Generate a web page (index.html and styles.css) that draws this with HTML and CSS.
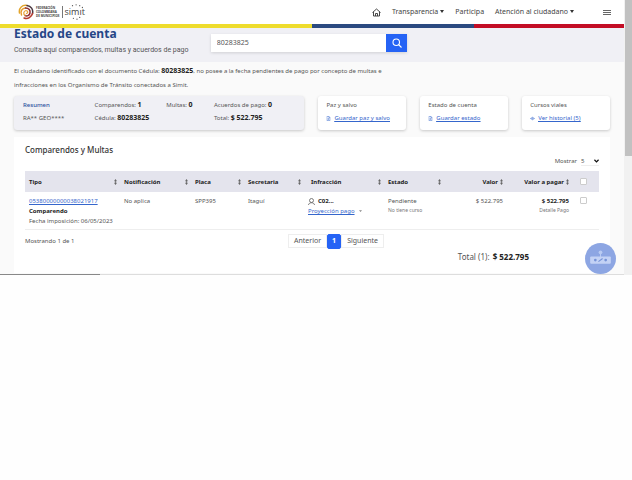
FILE: index.html
```html
<!DOCTYPE html>
<html lang="es">
<head>
<meta charset="utf-8">
<title>Estado de cuenta</title>
<link rel="stylesheet" href="styles.css">
</head>
<body>
<svg class="defs" aria-hidden="true">
  <symbol id="sort" viewBox="0 0 4 8"><path d="M2 0l2 3H2.500v2H4L2 8 0 5h1.500V3H0z"/></symbol>
  <symbol id="doc" viewBox="0 0 10 12"><path d="M1 1h5l3 3v7H1zM6 1v3h3M3 6h4M3 8.500h4" fill="none" stroke="currentColor" stroke-width="1.200"/></symbol>
</svg>
<div class="browser">
  <div class="page">
    <header class="top">
      <a class="brand" href="#">
        <svg class="emblem" viewBox="0 0 32 32" fill="none" stroke-linecap="round" aria-hidden="true">
          <path d="M3 18C1 8 9 1 18 3" stroke="#e3a52c" stroke-width="3"/>
          <path d="M18 3c8 1 13 8 11 16" stroke="#4a3840" stroke-width="3"/>
          <path d="M29 19c-2 7-9 12-17 9" stroke="#b73a2e" stroke-width="3"/>
          <path d="M7 22C4 15 8 8 15 8" stroke="#e59a2e" stroke-width="3"/>
          <path d="M15 8c7 0 10 5 9 10-1 5-6 7-10 5" stroke="#8c2b34" stroke-width="3"/>
          <path d="M14 23c-4-3-3-9 2-10 4 0 5 5 1 6" stroke="#e8a13a" stroke-width="2.500"/>
        </svg>
        <span class="fcm">FEDERACIÓN<br>COLOMBIANA<br>DE MUNICIPIOS</span>
        <span class="simit">simıt
          <svg viewBox="0 0 24 20" aria-hidden="true"><g fill="#555"><circle cx="7" cy="3" r=".7"/><circle cx="11" cy="2" r=".7"/><circle cx="15" cy="3" r=".7"/><circle cx="18" cy="5" r=".7"/><circle cx="8" cy="17" r=".7"/><circle cx="12" cy="18" r=".7"/><circle cx="15" cy="16" r=".7"/></g></svg>
        </span>
      </a>
      <nav class="nav">
        <a href="#" aria-label="Inicio"><svg class="home" viewBox="0 0 18 18" fill="none" stroke="#333" stroke-width="1.800"><path d="M1 9l8-7 8 7M3 8v8h12V8M7 16v-5h4v5"/></svg></a>
        <a class="drop" href="#">Transparencia</a>
        <a href="#">Participa</a>
        <a class="drop" href="#">Atención al ciudadano</a>
        <button class="menu" aria-label="Menú"><svg viewBox="0 0 8 7" stroke="#666"><path d="M0 1.500h8M0 3.500h8M0 5.500h8"/></svg></button>
      </nav>
    </header>
    <div class="flag"><i class="yellow"></i><i class="blue"></i><i class="red"></i></div>
    <section class="hero">
      <div class="heading">
        <h1>Estado de cuenta</h1>
        <p>Consulta aquí comparendos, multas y acuerdos de pago</p>
      </div>
      <form class="search">
        <input type="text" value="80283825" aria-label="Número de documento">
        <button type="button" aria-label="Buscar"><svg viewBox="0 0 20 20" fill="none" stroke="#fff" stroke-width="2.200"><circle cx="8.500" cy="8.500" r="6.500"/><path d="M13 13l6 6"/></svg></button>
      </form>
    </section>
    <main>
      <p class="intro">El ciudadano identificado con el documento Cédula: <b>80283825</b>, no posee a la fecha pendientes de pago por concepto de multas e infracciones en los Organismo de Tránsito conectados a Simit.</p>
      <section class="cards">
        <div class="card summary">
          <span class="accent">Resumen</span><span>Comparendos: <b>1</b></span><span>Multas: <b>0</b></span><span>Acuerdos de pago: <b>0</b></span>
          <span>RA** GEO****</span><span class="wide">Cédula: <b>80283825</b></span><span>Total: <b>$ 522.795</b></span>
        </div>
        <div class="card"><span>Paz y salvo</span><a href="#"><svg viewBox="0 0 10 12"><use href="#doc"/></svg><u>Guardar paz y salvo</u></a></div>
        <div class="card"><span>Estado de cuenta</span><a href="#"><svg viewBox="0 0 10 12"><use href="#doc"/></svg><u>Guardar estado</u></a></div>
        <div class="card"><span>Cursos viales</span><a href="#"><svg viewBox="0 0 12 10" fill="none" stroke="currentColor" stroke-width="1.200"><path d="M1 5q5-6 10 0-5 6-10 0z"/><circle cx="6" cy="5" r="1.500"/></svg><u>Ver historial (5)</u></a></div>
      </section>
      <section class="panel">
        <h2>Comparendos y Multas</h2>
        <div class="show">
          <label for="rows">Mostrar</label>
          <span class="select"><select id="rows"><option>5</option></select><svg viewBox="0 0 6 4" fill="none" stroke="#111" stroke-width="1.500"><path d="M.5 .5L3 3 5.500 .5"/></svg></span>
        </div>
        <table>
          <colgroup><col class="c-type"><col class="c-note"><col class="c-plate"><col class="c-office"><col class="c-fault"><col class="c-state"><col class="c-value"><col class="c-pay"><col class="c-check"></colgroup>
          <thead>
            <tr>
              <th><div>Tipo<svg><use href="#sort"/></svg></div></th>
              <th><div>Notificación<svg><use href="#sort"/></svg></div></th>
              <th><div>Placa<svg><use href="#sort"/></svg></div></th>
              <th><div>Secretaria<svg><use href="#sort"/></svg></div></th>
              <th class="fault"><div>Infracción<svg><use href="#sort"/></svg></div></th>
              <th><div>Estado<svg><use href="#sort"/></svg></div></th>
              <th class="num"><div>Valor<svg><use href="#sort"/></svg></div></th>
              <th class="num"><div>Valor a pagar<svg><use href="#sort"/></svg></div></th>
              <th><input type="checkbox" aria-label="Seleccionar todos"></th>
            </tr>
          </thead>
          <tbody>
            <tr>
              <td><a href="#">05380000000038021917</a><b class="line">Comparendo</b><span class="line nowrap">Fecha imposición: 06/05/2023</span></td>
              <td>No aplica</td>
              <td>SPP395</td>
              <td>Itaguí</td>
              <td><span class="code"><svg viewBox="0 0 14 16" fill="none" stroke="#555" stroke-width="1.500"><circle cx="7" cy="5" r="4"/><path d="M1 14c0-6 12-6 12 0"/></svg><b>C02...</b></span><a class="line nowrap" href="#">Proyección pago</a><svg class="caret" viewBox="0 0 6 4"><path d="M0 .5h6L3 4z"/></svg></td>
              <td>Pendiente<small>No tiene curso</small></td>
              <td class="num">$ 522.795</td>
              <td class="num"><b>$ 522.795</b><small>Detalle Pago</small></td>
              <td><input type="checkbox" aria-label="Seleccionar comparendo"></td>
            </tr>
          </tbody>
        </table>
        <div class="foot">
          <span>Mostrando 1 de 1</span>
          <div class="pager"><button>Anterior</button><button class="current">1</button><button>Siguiente</button></div>
        </div>
        <p class="total">Total (1): <b>$ 522.795</b></p>
      </section>
    </main>
    <button class="chat" aria-label="Asistente"><svg viewBox="0 0 30 30"><circle cx="15" cy="9" r="1.800" fill="#b9cbf2"/><path d="M15 10v4" stroke="#b9cbf2"/><rect x="5" y="13" width="20" height="7" rx="1" fill="#c3d2f5"/><circle cx="10" cy="16.500" r="1.300" fill="#7592d6"/><circle cx="20" cy="16.500" r="1.300" fill="#7592d6"/><path d="M13 18l4-3" stroke="#7592d6"/></svg></button>
    <div class="status"></div>
  </div>
  <div class="scroll"><div class="thumb"></div></div>
</div>
</body>
</html>
```

FILE: styles.css
```css
* { box-sizing: border-box; }
body { margin: 0; background: #fefefe; color: #555; font: 6px/8px "Noto Sans", sans-serif; }
h1, h2, p { margin: 0; }
b { color: #222; }
a { color: #3566cc; }
button, input, select { font: inherit; color: inherit; border: 0; padding: 0; margin: 0; }
.defs { position: absolute; width: 0; height: 0; }
.browser { display: flex; }
.page { position: relative; flex: 1; min-width: 0; background: #fafafa; border-bottom: 1px solid #ddd; }
.scroll { width: 8px; background: #f1f1f1; padding-left: 1px; }
.thumb { height: 57%; background: #c1c1c1; }

.top { display: flex; align-items: center; justify-content: space-between; height: 24px; padding: 0 13px 0 18px; background: #fff; }
.brand { display: flex; align-items: center; gap: 2px; color: #444; text-decoration: none; }
.emblem { width: 16px; height: 16px; }
.fcm { padding-right: 2px; border-right: 1px solid #777; font-size: 3px; line-height: 4px; font-weight: 700; }
.simit { position: relative; font: 9px/14px "Open Sans", sans-serif; }
.simit svg { position: absolute; left: 0; top: -2px; width: 24px; height: 18px; }
.nav { display: flex; align-items: center; gap: 11px; font-size: 7px; }
.nav a { color: #444; text-decoration: none; }
.home { display: block; width: 9px; height: 9px; }
.drop::after { content: ""; display: inline-block; margin-left: 2px; border: 2px solid transparent; border-top: 3px solid #333; border-bottom: 0; vertical-align: 1px; }
.menu { width: 8px; margin-left: 18px; background: none; }
.menu svg { display: block; width: 8px; height: 7px; }

.flag { display: flex; height: 4px; }
.yellow { flex: 50; background: #eedc2c; }
.blue { flex: 26; background: #2b4a80; }
.red { flex: 24; background: #c30d25; }

.hero { display: flex; height: 34px; padding: 0 14px; background: #f0f0f5; }
.heading { width: 33%; white-space: nowrap; }
.heading h1 { color: #254687; font-size: 12px; line-height: 12px; }
.heading p { padding-top: 5px; font: 7px/10px Roboto, sans-serif; }
.search { display: flex; width: 33%; height: 18px; margin-top: 6px; box-shadow: 0 1px 3px #0002; }
.search input { flex: 1; min-width: 0; padding: 0 6px; background: #fff; font-size: 7px; }
.search button { display: grid; place-items: center; width: 21px; background: #2563f5; }
.search svg { width: 10px; height: 10px; }

main { padding: 2px 14px 1px; }
.intro { width: 66%; line-height: 14px; }
.intro b { font-size: 7px; }
.cards { display: grid; grid-template-columns: 291fr 88fr 88fr 88fr; column-gap: 14px; margin-top: 4px; }
.card { display: flex; flex-direction: column; gap: 5px; padding: 5px 8px 8px; border-radius: 3px; background: #fff; box-shadow: 0 1px 3px #0003; white-space: nowrap; }
.card a { display: flex; align-items: center; gap: 3px; }
.card svg { width: 5px; height: 5px; }
.summary { display: grid; grid-template-columns: 72fr 72fr 48fr 83fr; gap: 5px 0; padding-left: 9px; background: #f0f0f5; }
.summary b { font-size: 7px; }
.wide { grid-column: span 2; }
.accent { color: #2b4f9e; font-weight: 500; }

.panel { margin-top: 7px; padding: 8px 11px 11px; background: #fff; }
.panel h2 { color: #333; font-size: 8px; line-height: 10px; font-weight: 500; }
.show { display: flex; justify-content: flex-end; align-items: center; gap: 4px; height: 10px; margin: 1px 0 5px; }
.select { display: flex; align-items: center; width: 18px; border-bottom: 1px solid #eee; }
.select select { flex: 1; appearance: none; background: none; }
.select svg { width: 5px; height: 4px; }

table { width: 100%; table-layout: fixed; border-collapse: collapse; }
.c-type { width: 95px; }
.c-note { width: 71px; }
.c-plate { width: 53px; }
.c-office { width: 60px; }
.c-fault { width: 80px; }
.c-state { width: 60px; }
.c-value { width: 64px; }
.c-check { width: 25px; }
th { height: 21px; padding: 0 3px 0 4px; background: #e4e4ed; color: #222; text-align: left; }
th div { display: flex; align-items: center; justify-content: space-between; white-space: nowrap; }
th svg { width: 3px; height: 6px; fill: #666; }
.fault { padding-left: 7px; }
th.num div { justify-content: flex-end; gap: 2px; }
th.num { padding-right: 5px; }
td { height: 37px; padding: 5px 5px 0 4px; border-bottom: 1px solid #eee; vertical-align: top; line-height: 9px; }
.line { line-height: 10px; }
b.line, span.line { display: block; }
.nowrap { white-space: nowrap; }
.num { text-align: right; }
small { display: block; font-size: 5px; color: #777; }
.code { display: flex; align-items: center; gap: 3px; }
.code svg { width: 7px; height: 8px; }
.caret { width: 3px; height: 2px; margin-left: 4px; vertical-align: 1px; fill: #888; }
input[type=checkbox] { appearance: none; display: block; width: 7px; height: 7px; margin: 0 auto 0 2px; border: 1px solid #ccc; border-radius: 1px; background: #fff; }

.foot { display: grid; grid-template-columns: 263fr 311fr; align-items: center; margin-top: 4px; }
.pager { display: flex; align-items: center; font-size: 7px; }
.pager button { height: 14px; padding: 0 5px; border: 1px solid #eee; background: #fff; }
.pager .current { height: 15px; padding: 0 4px; background: #2563f5; border-color: #2563f5; border-radius: 2px; color: #fff; font-weight: 700; }
.total { margin-top: 3px; padding-right: 70px; text-align: right; font-size: 8px; line-height: 10px; }
.total b { padding-left: 1px; }

.chat { position: absolute; right: 8px; bottom: 0; width: 31px; height: 31px; border-radius: 50%; background: #8da6e3; }
.chat svg { display: block; width: 31px; height: 31px; }
.status { position: absolute; left: 0; bottom: -1px; width: 16%; height: 1px; background: #888; }
```
